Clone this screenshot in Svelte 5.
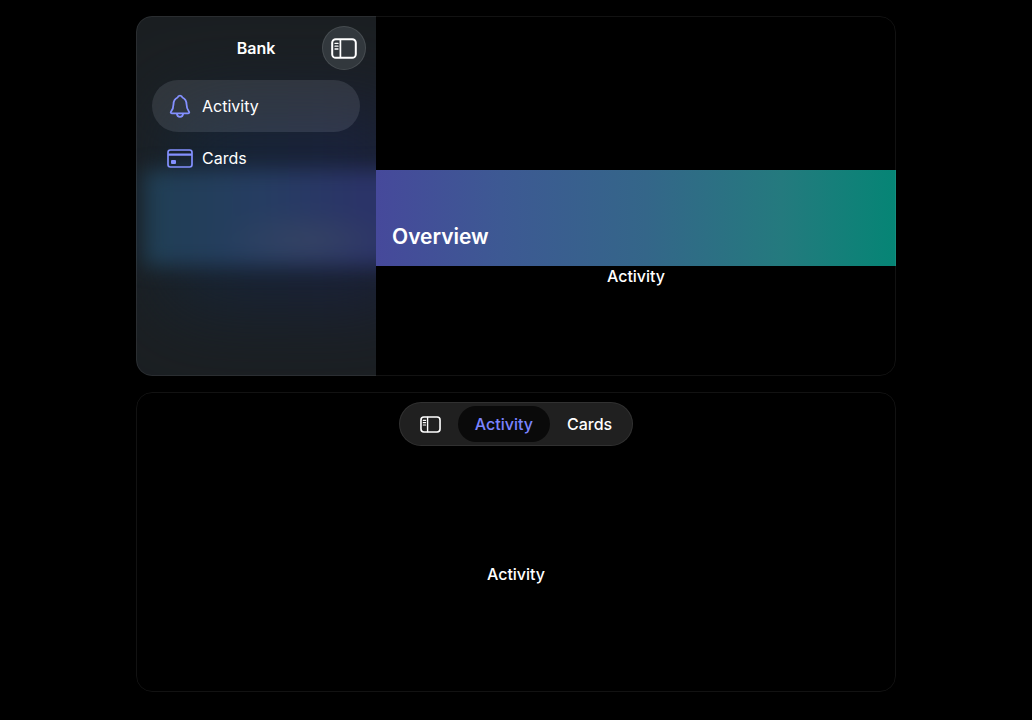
<script lang="ts">
	type Tab = { id: string; label: string };

	const tabs: Tab[] = [
		{ id: 'activity', label: 'Activity' },
		{ id: 'cards', label: 'Cards' }
	];

	let selected = $state('activity');
	let current = $derived(tabs.find((tab) => tab.id === selected)?.label);
</script>

{#snippet sidebarIcon(width: number, height: number)}
	<svg {width} {height} viewBox="0 0 26 21" fill="none" stroke="currentColor" aria-hidden="true">
		<rect x="1.2" y="1.2" width="23.600" height="18.600" rx="3.6" stroke-width="2" />
		<path d="M9.400 1v19" stroke-width="1.7" />
		<path d="M4 5.400h3M4 8.200h3M4 11h3" stroke-width="1.300" stroke-linecap="round" />
	</svg>
{/snippet}

{#snippet tabIcon(id: string)}
	{#if id === 'activity'}
		<svg width="26" height="26" viewBox="0 0 26 26" fill="none" stroke="currentColor" stroke-width="1.8" stroke-linejoin="round" aria-hidden="true">
			<path d="M13 2.600c-1.300 0-2.100.8-2.400 1.900-2.700 1.100-4 3.600-4.100 6.600-.1 4.200-.5 5.200-2.300 7.300-.9 1.100-.5 1.900.6 1.900h16.400c1.100 0 1.500-.8.6-1.900-1.800-2.100-2.200-3.100-2.300-7.300-.1-3-1.400-5.500-4.100-6.600-.3-1.100-1.100-1.900-2.400-1.900Z" />
			<path d="M9.800 20.400c.2 2.200 1.500 3.400 3.200 3.400s3-1.200 3.200-3.400" />
		</svg>
	{:else}
		<svg width="26" height="26" viewBox="0 0 26 26" fill="none" stroke="currentColor" aria-hidden="true">
			<rect x="1" y="5" width="24" height="17" rx="2.400" stroke-width="1.700" />
			<path d="M1 9.600h24" stroke-width="2.400" />
			<rect x="4" y="15" width="5" height="4" rx="1" fill="currentColor" stroke="none" />
		</svg>
	{/if}
{/snippet}

<main>
	<section class="window window--split" aria-label="Sidebar layout">
		<aside class="sidebar">
			<div class="sidebar__glow" aria-hidden="true"></div>
			<div class="sidebar__reflection" aria-hidden="true"></div>
			<header class="sidebar__header">
				<h2>Bank</h2>
				<button class="sidebar__toggle" type="button" aria-label="Hide sidebar">
					{@render sidebarIcon(26, 21)}
				</button>
			</header>
			<nav class="sidebar__nav" aria-label="Sections">
				{#each tabs as tab (tab.id)}
					<button
						class="row"
						class:row--selected={tab.id === selected}
						type="button"
						aria-current={tab.id === selected ? 'page' : undefined}
						onclick={() => (selected = tab.id)}
					>
						{@render tabIcon(tab.id)}
						<span>{tab.label}</span>
					</button>
				{/each}
			</nav>
		</aside>
		<div class="content">
			<div class="banner"><h1>Overview</h1></div>
			<p>{current}</p>
		</div>
	</section>

	<section class="window window--tabs" aria-label="Tab bar layout">
		<nav class="tabbar" aria-label="Tabs">
			<button class="tabbar__toggle" type="button" aria-label="Show sidebar">
				{@render sidebarIcon(21, 17)}
			</button>
			{#each tabs as tab (tab.id)}
				<button
					class="tab"
					class:tab--selected={tab.id === selected}
					type="button"
					aria-current={tab.id === selected ? 'page' : undefined}
					onclick={() => (selected = tab.id)}
				>
					{tab.label}
				</button>
			{/each}
		</nav>
		<div class="content">
			<p>{current}</p>
		</div>
	</section>
</main>

<style>
	:global(body) {
		background: #000;
	}

	main {
		display: grid;
		gap: 16px;
		max-width: 760px;
		margin: 0 auto;
		padding: 16px;
		color: #fff;
		font-family: Inter, 'Liberation Sans', sans-serif;
		font-size: 16px;
		line-height: 20px;
	}

	h1,
	h2,
	p {
		margin: 0;
	}

	button {
		border: 0;
		padding: 0;
		background: none;
		color: inherit;
		font: inherit;
		cursor: pointer;
	}

	svg {
		display: block;
		flex: none;
	}

	.window {
		position: relative;
		display: grid;
		border-radius: 16px;
		overflow: hidden;
	}

	/* hairline drawn over the content so the banner runs to the edge */
	.window::after {
		content: '';
		position: absolute;
		inset: 0;
		border: 1px solid rgb(255 255 255 / 7%);
		border-radius: inherit;
		pointer-events: none;
	}

	.window--split {
		grid-template-columns: 240px minmax(0, 1fr);
		min-height: 360px;
	}

	.window--tabs {
		grid-template-rows: 64px 1fr;
		min-height: 300px;
	}

	.sidebar {
		position: relative;
		isolation: isolate;
		background: #1b1f22;
		overflow: hidden;
	}

	.sidebar__glow {
		position: absolute;
		inset: 88px -32px 72px 32px;
		z-index: -1;
		background: linear-gradient(90deg, #162635, #1b2140);
		filter: blur(40px);
	}

	.sidebar__reflection {
		position: absolute;
		inset: 154px -24px 110px 8px;
		z-index: -1;
		background:
			radial-gradient(90px 32px at 64% 74%, rgb(62 74 98 / 60%), transparent),
			linear-gradient(90deg, #203f54, #263d62 46%, #2b3468 84%);
		filter: blur(10px);
	}

	.sidebar__header {
		display: grid;
		grid-template-columns: 44px 1fr 44px;
		align-items: center;
		height: 64px;
		padding: 0 10px;
	}

	h2 {
		grid-column: 2;
		font-size: 16px;
		font-weight: 600;
		text-align: center;
	}

	.sidebar__toggle {
		display: grid;
		height: 44px;
		place-items: center;
		border: 1px solid rgb(255 255 255 / 10%);
		border-radius: 50%;
		background: #32383d;
	}

	.sidebar__nav {
		display: grid;
		padding: 0 16px;
	}

	.row {
		display: flex;
		align-items: center;
		gap: 9px;
		height: 52px;
		padding: 0 15px;
		border-radius: 26px;
		text-align: left;
	}

	.row svg {
		color: #8490ff;
	}

	.row--selected {
		background: rgb(225 235 255 / 11%);
	}

	.content {
		display: flex;
		flex-direction: column;
		justify-content: center;
		font-weight: 500;
		text-align: center;
	}

	.window--split .content {
		padding-top: 64px;
	}

	.banner {
		display: flex;
		align-items: flex-end;
		height: 96px;
		box-sizing: border-box;
		padding: 16px;
		background: linear-gradient(90deg, #46499b, #3d5993 24%, #346689 52%, #247a7e 78%, #058575);
	}

	h1 {
		font-size: 21px;
		font-weight: 600;
		line-height: 26px;
	}

	.tabbar {
		display: flex;
		place-self: center;
		height: 44px;
		box-sizing: border-box;
		padding: 4px;
		border-radius: 22px;
		background: #202020;
		box-shadow: inset 0 0 0 1px rgb(255 255 255 / 8%);
		font-weight: 500;
	}

	.tabbar__toggle {
		display: grid;
		width: 55px;
		place-items: center;
	}

	.tab {
		padding: 0 17px;
		border-radius: 18px;
	}

	.tab--selected {
		background: #0a0a0a;
		color: #7a84ff;
	}
</style>
